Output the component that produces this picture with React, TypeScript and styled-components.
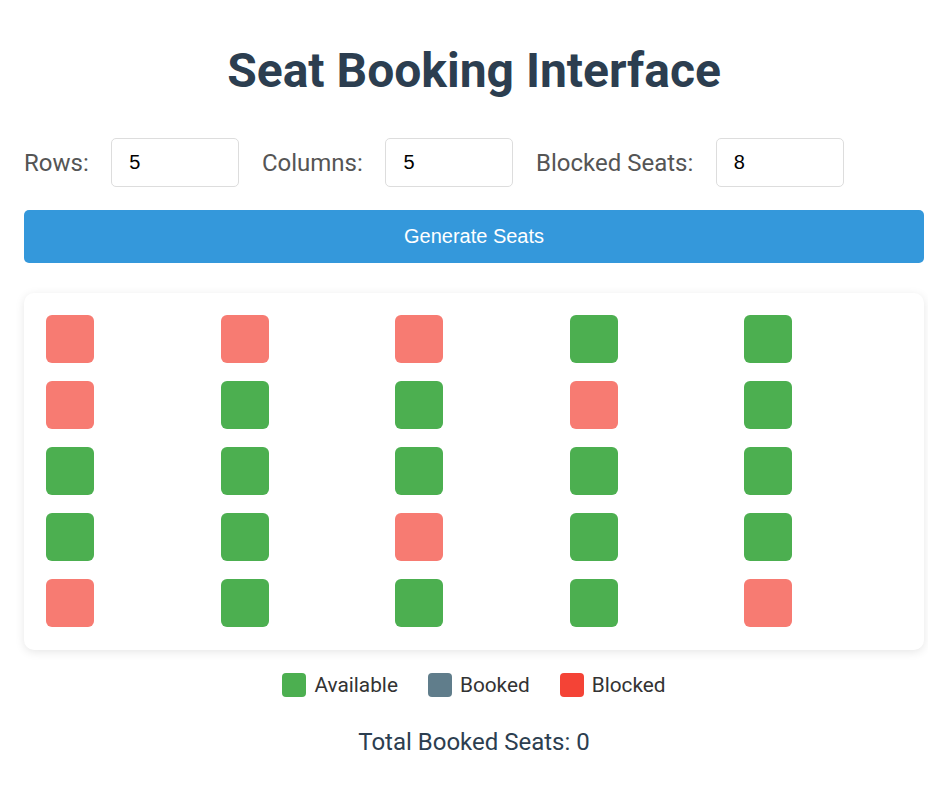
import styled, { createGlobalStyle } from "styled-components";

type SeatState = "available" | "booked" | "blocked";

const layout: SeatState[][] = [
    ["blocked", "blocked", "blocked", "available", "available"],
    ["blocked", "available", "available", "blocked", "available"],
    ["available", "available", "available", "available", "available"],
    ["available", "available", "blocked", "available", "available"],
    ["blocked", "available", "available", "available", "blocked"],
];

export default function App() {
    return (
        <>
            <GlobalStyle />
            <Page>
                <Title>Seat Booking Interface</Title>
                <Controls>
                    <Label>Rows:</Label>
                    <NumberInput type="number" defaultValue={5} />
                    <Label>Columns:</Label>
                    <NumberInput type="number" defaultValue={5} />
                    <Label>Blocked Seats:</Label>
                    <NumberInput type="number" defaultValue={8} />
                </Controls>
                <GenerateButton>Generate Seats</GenerateButton>
                <SeatCard>
                    {layout.flat().map((state, i) => (
                        <Seat key={i} $state={state} />
                    ))}
                </SeatCard>
                <Legend>
                    <LegendItem>
                        <Swatch $color="#4caf50" />
                        Available
                    </LegendItem>
                    <LegendItem>
                        <Swatch $color="#607d8b" />
                        Booked
                    </LegendItem>
                    <LegendItem>
                        <Swatch $color="#f44336" />
                        Blocked
                    </LegendItem>
                </Legend>
                <Total>Total Booked Seats: 0</Total>
            </Page>
        </>
    )
}

const GlobalStyle = createGlobalStyle`
    body {
        margin: 0;
        background: #ffffff;
        font-family: Roboto, "Liberation Sans", sans-serif;
    }

    input::-webkit-outer-spin-button,
    input::-webkit-inner-spin-button {
        -webkit-appearance: none;
        margin: 0;
    }
`

const Page = styled.div`
    width: 900px;
    margin-left: 24px;
    padding-top: 42px;
`

const Title = styled.h1`
    margin: 0 0 39px;
    text-align: center;
    font-family: Roboto, sans-serif;
    font-size: 48px;
    font-weight: 700;
    color: #2c3e50;
`

const Controls = styled.div`
    display: flex;
    align-items: center;
    gap: 22.6px;
    margin-bottom: 23px;
`

const Label = styled.label`
    font-family: Roboto, sans-serif;
    font-size: 24px;
    color: #555555;
`

const NumberInput = styled.input`
    box-sizing: border-box;
    width: 128px;
    height: 49px;
    padding: 0 17px;
    border: 1px solid #dddddd;
    border-radius: 5px;
    font-family: "Liberation Sans", Arial, sans-serif;
    font-size: 20px;
    color: #000000;
    -moz-appearance: textfield;
`

const GenerateButton = styled.button`
    display: block;
    width: 100%;
    height: 53px;
    border: none;
    border-radius: 5px;
    background-color: #3498db;
    color: #ffffff;
    font-family: "Liberation Sans", Arial, sans-serif;
    font-size: 20px;
    margin-bottom: 30px;

    &:hover {
        cursor: pointer;
    }
`

const SeatCard = styled.div`
    display: grid;
    grid-template-columns: repeat(5, 1fr);
    column-gap: 16.5px;
    row-gap: 18px;
    padding: 22px 22px 23px;
    background: #ffffff;
    border-radius: 10px;
    box-shadow: 0 2px 10px rgba(0, 0, 0, 0.1);
`

const seatColors: Record<SeatState, string> = {
    available: "#4caf50",
    booked: "#607d8b",
    blocked: "#f77b72",
};

const Seat = styled.div<{ $state: SeatState }>`
    width: 48px;
    height: 48px;
    border-radius: 6px;
    background-color: ${({ $state }) => seatColors[$state]};
    cursor: ${({ $state }) => ($state === "available" ? "pointer" : "not-allowed")};
`

const Legend = styled.div`
    display: flex;
    justify-content: center;
    gap: 30px;
    margin-top: 23px;
`

const LegendItem = styled.div`
    display: flex;
    align-items: center;
    gap: 8px;
    font-family: Roboto, sans-serif;
    font-size: 20.8px;
    color: #333333;
`

const Swatch = styled.span<{ $color: string }>`
    width: 24px;
    height: 24px;
    border-radius: 4px;
    background-color: ${({ $color }) => $color};
`

const Total = styled.p`
    margin: 31px 0 0;
    text-align: center;
    font-family: Roboto, sans-serif;
    font-size: 24px;
    color: #2c3e50;
`
